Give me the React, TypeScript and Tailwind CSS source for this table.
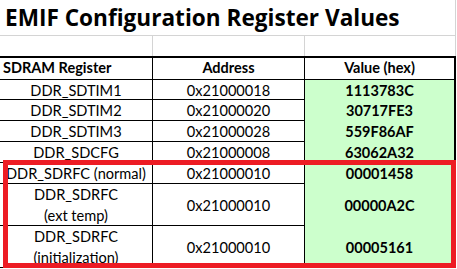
const rows = [
  { name: ['DDR_SDTIM1'], addr: '0x21000018', value: '1113783C', h: 'h-[20px]' },
  { name: ['DDR_SDTIM2'], addr: '0x21000020', value: '30717FE3', h: 'h-[21px]' },
  { name: ['DDR_SDTIM3'], addr: '0x21000028', value: '559F86AF', h: 'h-[21px]' },
  { name: ['DDR_SDCFG'], addr: '0x21000008', value: '63062A32', h: 'h-[21px]' },
  { name: ['DDR_SDRFC (normal)'], addr: '0x21000010', value: '00001458', h: 'h-[21px]' },
  { name: ['DDR_SDRFC', '(ext temp)'], addr: '0x21000010', value: '00000A2C', h: 'h-[42px]' },
  { name: ['DDR_SDRFC', '(initialization)'], addr: '0x21000010', value: '00005161', h: 'h-[42px]' },
];

export default function App() {
  return (
    <div className="relative w-[457px] h-[269px] overflow-hidden bg-white text-black font-['Lato',sans-serif]">
      <div className="w-[456px] h-[36px] border-b border-r border-[#d4d4d4] pl-[5px] pt-[2px] flex items-center">
        <h1 className="text-[22.6px] font-bold leading-none font-['Open_Sans',sans-serif]">
          EMIF Configuration Register Values
        </h1>
      </div>
      <div className="grid grid-cols-[153px_152px_151px] h-[20px]">
        <div className="border-r border-[#d4d4d4]" />
        <div className="border-r border-[#d4d4d4]" />
        <div className="border-r border-[#d4d4d4]" />
      </div>
      <div className="w-[456px] border-t-2 border-black">
        <div className="grid grid-cols-[153px_152px_151px] h-[22px] border-b border-black text-[14.5px] font-bold leading-none">
          <div className="border-r border-black flex items-center pl-[3px]">SDRAM Register</div>
          <div className="border-r border-black flex items-center justify-center">Address</div>
          <div className="border-r-2 border-black flex items-center justify-center">Value (hex)</div>
        </div>
        {rows.map((r) => (
          <div
            key={r.value}
            className={`grid grid-cols-[153px_152px_151px] ${r.h} border-b border-black text-[14.6px] leading-[21px]`}
          >
            <div className="border-r border-black flex flex-col items-center justify-center">
              {r.name.map((n) => (
                <span key={n}>{n}</span>
              ))}
            </div>
            <div className="border-r border-black flex items-center justify-center">{r.addr}</div>
            <div className="border-r-2 border-black bg-[#ccffcc] flex items-center justify-center font-bold text-[14.5px]">
              {r.value}
            </div>
          </div>
        ))}
      </div>
      <div className="absolute left-[3px] top-[160px] w-[453px] h-[108px] border-[5px] border-[#ed1c24]" />
    </div>
  );
}
